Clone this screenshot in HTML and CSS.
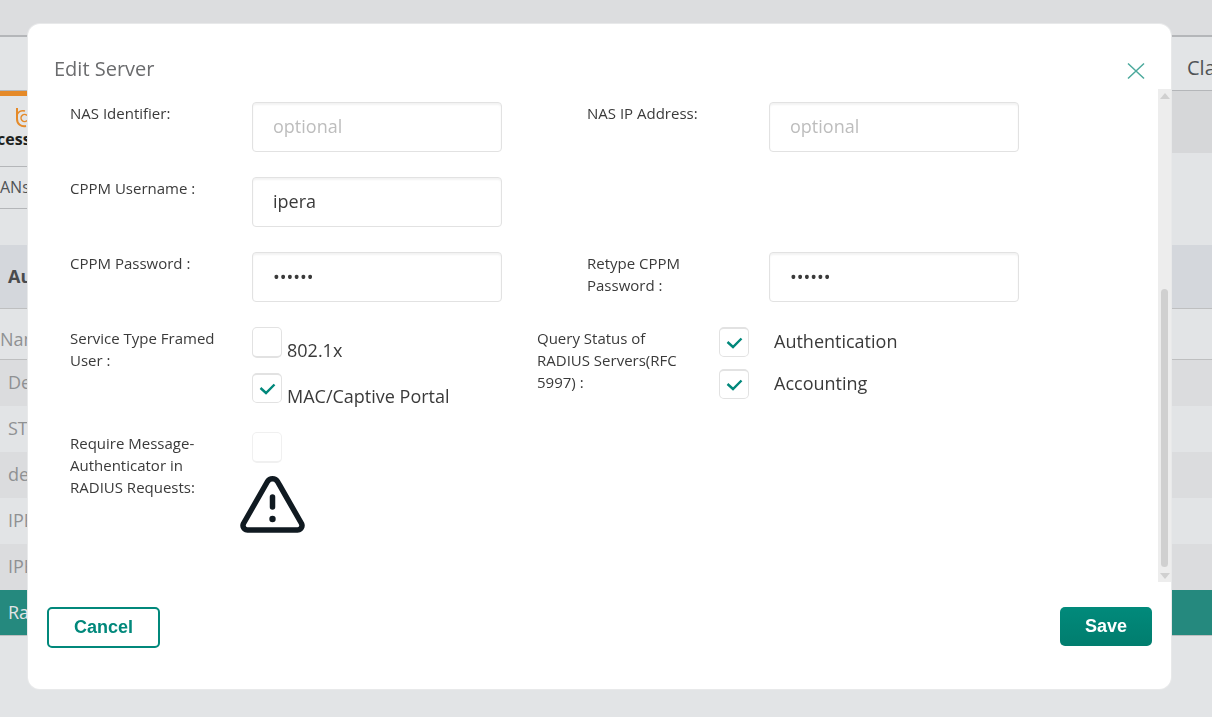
FILE: index.html
```html
<!DOCTYPE html>
<html lang="en">
<head>
<meta charset="utf-8">
<title>Edit Server</title>
<link rel="stylesheet" href="styles.css">
</head>
<body>
<div class="page" aria-hidden="true">
  <div class="page-top"></div>
  <div class="page-nav"><span class="nav-item">Cla</span></div>
  <div class="page-head">
    <div class="tabs">
      <div class="tab">
        <svg class="tab-icon" width="30" height="22" viewBox="0 0 30 22" fill="none" stroke="#e58a29" stroke-width="2">
          <path d="M3 1v11c0 5 4 8 9 7"/>
          <path d="M3 8c1-3 4-5 8-4" stroke-width="1.500"/>
          <path d="M13 8.500a3.500 3.500 0 1 0 0 5" stroke-width="1.500"/>
        </svg>
        <span class="tab-name">cess</span>
      </div>
      <div class="subtab">ANs</div>
    </div>
    <div class="summary"></div>
  </div>
  <div class="section-head">Auth</div>
  <div class="column-head">Name</div>
  <div class="row row-dark">De</div>
  <div class="row">STA</div>
  <div class="row row-dark">de</div>
  <div class="row">IPE</div>
  <div class="row row-dark">IPE</div>
  <div class="row row-selected">Ra</div>
</div>

<form class="modal" role="dialog" aria-labelledby="title">
  <header class="modal-head">
    <h1 class="title" id="title">Edit Server</h1>
    <button class="close" type="button" aria-label="Close">
      <svg width="18" height="18" viewBox="0 0 18 18" fill="none" stroke="#4ba99c" stroke-width="1.5"><path d="M1 1.500L17 16.500M17 1.500L1 16.500"/></svg>
    </button>
  </header>

  <div class="modal-body">
    <div class="fields">
      <div class="line">
        <div class="field">
          <label class="label" for="nas-id">NAS Identifier:</label>
          <input class="input" id="nas-id" type="text" placeholder="optional">
        </div>
        <div class="field">
          <label class="label" for="nas-ip">NAS IP Address:</label>
          <input class="input" id="nas-ip" type="text" placeholder="optional">
        </div>
      </div>
      <div class="line">
        <div class="field">
          <label class="label" for="user">CPPM Username :</label>
          <input class="input" id="user" type="text" value="ipera">
        </div>
      </div>
      <div class="line">
        <div class="field">
          <label class="label" for="pass">CPPM Password :</label>
          <input class="input" id="pass" type="password" value="secret">
        </div>
        <div class="field">
          <label class="label" for="pass2">Retype CPPM Password :</label>
          <input class="input" id="pass2" type="password" value="secret">
        </div>
      </div>
      <div class="line">
        <div class="field field-narrow" role="group" aria-labelledby="service">
          <span class="label" id="service">Service Type Framed User :</span>
          <div class="options options-service">
            <label class="option option-low"><input class="check" type="checkbox"><span>802.1x</span></label>
            <label class="option option-low"><input class="check" type="checkbox" checked><span>MAC/Captive Portal</span></label>
          </div>
        </div>
        <div class="field" role="group" aria-labelledby="query">
          <span class="label" id="query">Query Status of RADIUS Servers(RFC 5997) :</span>
          <div class="options options-query">
            <label class="option option-wide"><input class="check" type="checkbox" checked><span>Authentication</span></label>
            <label class="option option-wide"><input class="check" type="checkbox" checked><span>Accounting</span></label>
          </div>
        </div>
      </div>
      <div class="line">
        <div class="field">
          <label class="label" for="require">Require Message-Authenticator in RADIUS Requests:</label>
          <div class="require">
            <input class="check" id="require" type="checkbox" disabled>
            <svg class="warning" width="68" height="60" viewBox="0 0 68 60" fill="none" stroke="#101a21" stroke-width="5.500" stroke-linecap="round">
              <path d="M28.500 6.500a6 6 0 0 1 10 0L62.500 48.500a4.500 4.500 0 0 1-4 6.500H8.500a4.500 4.500 0 0 1-4-6.500z" stroke-linejoin="round"/>
              <path d="M33.500 22v10"/>
              <circle cx="33.500" cy="44" r="3.200" fill="#101a21" stroke="none"/>
            </svg>
          </div>
        </div>
      </div>
    </div>
    <div class="scrollbar" aria-hidden="true">
      <span class="arrow arrow-up"></span>
      <span class="track"><span class="thumb"></span></span>
      <span class="arrow arrow-down"></span>
    </div>
  </div>

  <footer class="modal-foot">
    <button class="button cancel" type="button">Cancel</button>
    <button class="button save" type="submit">Save</button>
  </footer>
</form>
</body>
</html>
```
FILE: styles.css
```css
* { box-sizing: border-box; }

body {
  margin: 0;
  min-height: 100vh;
  overflow: hidden;
  background: #e2e4e6;
  color: #3a3a3a;
  font: 18px/24px "Open Sans", "Noto Sans", sans-serif;
}

/* Page behind the dialog */
.page-top { height: 35px; background: #dcdddf; }
.page-nav {
  display: flex;
  justify-content: flex-end;
  align-items: center;
  height: 56px;
  padding-top: 8px;
  border-top: 2px solid #b4b6b9;
  border-bottom: 1px solid #b4b6b9;
  color: #505356;
  font-size: 20px;
  overflow: hidden;
}
.nav-item { width: 25px; white-space: nowrap; }
.page-head { display: flex; height: 154px; }
.tabs { width: 50%; }
.tab {
  height: 75px;
  border-top: 5px solid #e58a29;
  padding-top: 11px;
}
.tab-icon { display: block; margin-left: 14px; }
.tab-name {
  display: block;
  margin-left: -3px;
  color: #1d1f20;
  font-size: 16px;
  font-weight: 700;
  line-height: 20px;
}
.subtab {
  height: 43px;
  border: solid #b4b6b9;
  border-width: 1px 0;
  color: #505356;
  font-size: 16px;
  line-height: 41px;
}
.summary { flex: 1; height: 62px; background: #d6d7d9; }
.section-head {
  height: 64px;
  padding-left: 8px;
  border-bottom: 1px solid #bebfc0;
  background: #d4d7dc;
  color: #4a4b4d;
  font-weight: 700;
  line-height: 63px;
}
.column-head {
  height: 51px;
  padding-top: 6px;
  border-bottom: 1px solid #bebfc0;
  color: #8f9193;
  line-height: 48px;
}
.row { height: 46px; padding-left: 8px; color: #8f9193; line-height: 45px; }
.row-dark { background: #dbdcde; }
.row-selected {
  border-bottom: 1px solid #bebfc0;
  background: #25897e;
  color: #e2e4e6;
}

/* Dialog */
.modal {
  position: fixed;
  inset: 24px 41px 28px 28px;
  display: flex;
  flex-direction: column;
  border-radius: 12px;
  background: #fff;
  box-shadow: 0 0 0 1px #e8e9ea;
}
.modal-head {
  display: flex;
  flex: none;
  align-items: center;
  justify-content: space-between;
  height: 65px;
  padding: 25px 26px 0;
}
.title { margin: 0; color: #6b6c6e; font-size: 20px; font-weight: 400; }
.close { display: flex; padding: 3px 0 0; border: 0; background: none; }
.modal-body { display: flex; flex: 1; min-height: 0; }
.fields {
  display: flex;
  flex: 1;
  flex-direction: column;
  gap: 25px;
  overflow: hidden;
  padding: 13px 0 0 42px;
}
.line, .field { display: flex; }
.field { flex: none; width: 517px; }
.field-narrow { width: 467px; }
.label {
  flex: none;
  width: 182px;
  padding-right: 30px;
  font-size: 15px;
  line-height: 22px;
}
.input {
  width: 250px;
  height: 50px;
  padding: 0 20px 2px;
  border: 1px solid #e2e2e2;
  border-radius: 4px;
  background: #fff;
  box-shadow: inset 0 2px 2px #f3f3f3;
  color: #3a3a3a;
  font: inherit;
}
.input[type="password"] { padding-bottom: 0; }
.input::placeholder { color: #bdbdbd; opacity: 1; }

.options { display: flex; flex-direction: column; }
.options-service { gap: 16px; height: 80px; }
.options-query { gap: 12px; }
.option { display: flex; height: 30px; white-space: nowrap; }
.option-low { gap: 5px; }
.option-low span { padding-top: 11px; }
.option-wide { gap: 25px; }
.option-wide span { padding-top: 2px; }
.check {
  flex: none;
  width: 30px;
  height: 31px;
  margin: 0;
  appearance: none;
  border: 1px solid #e2e2e2;
  border-bottom-width: 2px;
  border-radius: 5px;
  background: #fff;
}
.check:checked {
  height: 30px;
  border-width: 2px 1px 1px;
  background: url("data:image/svg+xml,%3Csvg xmlns='http://www.w3.org/2000/svg' width='28' height='27' fill='none' stroke='%2301887b' stroke-width='2.400'%3E%3Cpath d='M7.500 13L13 18L21.500 9.500'/%3E%3C/svg%3E") no-repeat;
}
.check:disabled { border-color: #f0f0f0; }
.require { display: flex; flex-direction: column; gap: 12px; }
.warning { margin-left: -13px; }

.scrollbar {
  display: flex;
  flex: none;
  flex-direction: column;
  align-items: center;
  width: 13px;
  padding: 4px 0 3px;
  background: #ededed;
}
.arrow { border: solid transparent; border-width: 0 5px; }
.arrow-up { border-bottom: 6px solid #d0d0d0; }
.arrow-down { border-top: 6px solid #d0d0d0; }
.track {
  display: flex;
  flex: 1;
  align-items: flex-end;
  padding: 5px 0 6px;
}
.thumb { width: 7px; height: 60%; border-radius: 4px; background: #d0d0d0; }

.modal-foot {
  display: flex;
  flex: none;
  align-items: flex-start;
  justify-content: space-between;
  height: 107px;
  padding: 25px 19px 0;
}
.button {
  border: 0;
  border-radius: 5px;
  font: 700 18px/22px "Liberation Sans", Arial, sans-serif;
}
.cancel {
  height: 41px;
  padding: 0 25px 2px;
  border: 2px solid #01887b;
  background: #fff;
  color: #01887b;
}
.save {
  height: 39px;
  padding: 0 25px 2px;
  background: linear-gradient(#018a7b, #017d6e);
  color: #fff;
}
```
